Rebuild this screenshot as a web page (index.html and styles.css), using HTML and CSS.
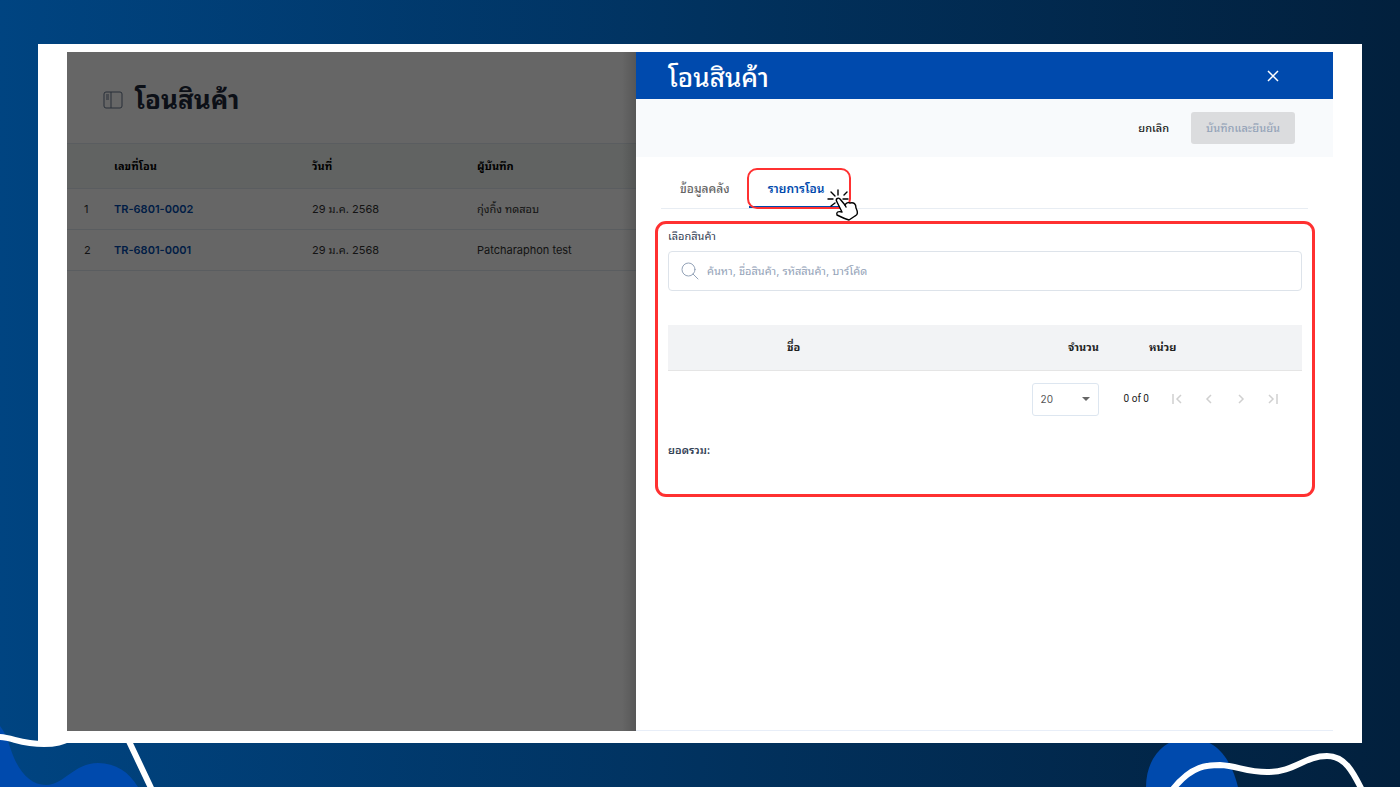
FILE: index.html
```html
<!DOCTYPE html>
<html lang="th">
  <head>
    <meta charset="utf-8">
    <title>โอนสินค้า</title>
    <link rel="stylesheet" href="styles.css">
  </head>
  <body>
    <svg class="deco deco-left" width="160" height="67" viewBox="0 0 160 67" aria-hidden="true">
      <path fill="#004aad" d="M0 6C6 14 8 21 11 30C18 51 30 65 46 65C64 65 74 43 98 43C116 43 129 52 138 67H0z" />
      <path fill="none" stroke="#fff" stroke-width="6" d="M-2 17C12 17 20 24 44 24C58 24 64 21 72 18M126 15L152 70" />
    </svg>
    <svg class="deco deco-right" width="260" height="52" viewBox="0 0 260 52" aria-hidden="true">
      <path fill="#004aad" d="M6 52C6 25 22 5 45 3C76 1 91 24 98 52z" />
      <path fill="none" stroke="#fff" stroke-width="6" d="M33 54C52 30 68 30 80 30C98 31 106 37 127 37C155 37 164 21 187 21C205 21 213 37 222 55" />
    </svg>

    <div class="card">
      <div class="app">
        <main class="list">
          <div class="list-title">
            <svg width="20" height="18" viewBox="0 0 20 18" fill="none" stroke="#64748b">
              <rect x="1" y="1" width="18" height="16" rx="2" />
              <path d="M8 1v16M3 4h3M3 6h3M3 8h3" />
            </svg>
            <h1>โอนสินค้า</h1>
          </div>
          <table>
            <thead>
              <tr>
                <th class="col-no"></th>
                <th class="col-id">เลขที่โอน</th>
                <th class="col-date">วันที่</th>
                <th>ผู้บันทึก</th>
              </tr>
            </thead>
            <tbody>
              <tr>
                <td class="col-no">1</td>
                <td><a href="#">TR-6801-0002</a></td>
                <td>29 ม.ค. 2568</td>
                <td>กุ่งกิ้ง ทดสอบ</td>
              </tr>
              <tr>
                <td class="col-no">2</td>
                <td><a href="#">TR-6801-0001</a></td>
                <td>29 ม.ค. 2568</td>
                <td>Patcharaphon test</td>
              </tr>
            </tbody>
          </table>
        </main>

        <aside class="drawer">
          <header class="drawer-header">
            <h2>โอนสินค้า</h2>
            <button class="btn-close" aria-label="ปิด">
              <svg width="12" height="12" viewBox="0 0 12 12" fill="none" stroke="#fff" stroke-width="1.5">
                <path d="M1 1l10 10M11 1L1 11" />
              </svg>
            </button>
          </header>
          <div class="toolbar">
            <button class="btn-cancel">ยกเลิก</button>
            <button class="btn-save" disabled>บันทึกและยืนยัน</button>
          </div>

          <nav class="tabs">
            <button class="tab">ข้อมูลคลัง</button>
            <button class="tab active">
              รายการโอน
              <svg class="pointer" width="32" height="34" viewBox="0 0 32 34" fill="none" stroke="#000" stroke-width="1.4" stroke-linecap="round" stroke-linejoin="round">
                <path d="M11 2v5M4 4l4 4M17 7l3-3M1 11h5M16 11h5M4 18l4-3" />
                <path fill="#fff" d="M10 14C8 11 11 9 13 11L18 17C19 15 21 14 23 15C27 14 29 16 29 20C31 24 31 27 28 28L22 32C18 31 14 29 10 27C9 24 11 23 15 24z" />
                <path d="M18 17l1 2" />
              </svg>
            </button>
          </nav>

          <section class="items">
            <label for="search">เลือกสินค้า</label>
            <div class="search">
              <svg width="18" height="18" viewBox="0 0 18 18" fill="none" stroke="#94a3b8" stroke-linecap="round">
                <circle cx="7.500" cy="7.500" r="6.500" />
                <path d="M12 12l5 5" />
              </svg>
              <input type="text" id="search" placeholder="ค้นหา, ชื่อสินค้า, รหัสสินค้า, บาร์โค้ด">
            </div>
            <table>
              <thead>
                <tr>
                  <th class="col-image"></th>
                  <th>ชื่อ</th>
                  <th class="col-qty">จำนวน</th>
                  <th class="col-unit">หน่วย</th>
                </tr>
              </thead>
            </table>
            <div class="paginator">
              <div class="page-size">
                <select aria-label="จำนวนต่อหน้า">
                  <option>20</option>
                </select>
                <svg width="8" height="4" viewBox="0 0 8 4"><path fill="#666" d="M0 0h8L4 4z" /></svg>
              </div>
              <span class="range">0 of 0</span>
              <button disabled aria-label="หน้าแรก">
                <svg width="12" height="12" viewBox="0 0 12 12"><path d="M2 1v10M10 2L6 6l4 4" /></svg>
              </button>
              <button disabled aria-label="ก่อนหน้า">
                <svg width="12" height="12" viewBox="0 0 12 12"><path d="M8 2L4 6l4 4" /></svg>
              </button>
              <button disabled aria-label="ถัดไป">
                <svg width="12" height="12" viewBox="0 0 12 12"><path d="M4 2l4 4-4 4" /></svg>
              </button>
              <button disabled aria-label="หน้าสุดท้าย">
                <svg width="12" height="12" viewBox="0 0 12 12"><path d="M2 2l4 4-4 4M10 1v10" /></svg>
              </button>
            </div>
            <p class="total">ยอดรวม:</p>
          </section>
        </aside>
      </div>
    </div>
  </body>
</html>
```

FILE: styles.css
```css
* {
  box-sizing: border-box;
}
body {
  margin: 0;
  min-height: 100vh;
  padding: 44px 38px;
  display: flex;
  position: relative;
  overflow: hidden;
  background: linear-gradient(90deg, #004481, #02203d);
  font-family: Inter, "Noto Sans Thai Looped", Loma, Tahoma, Waree, Garuda, sans-serif;
  font-size: 11px;
  line-height: 16px;
  color: #222;
}
button, input, select {
  font: inherit;
  color: inherit;
  border: none;
  background: none;
  padding: 0;
}
h1, h2, p {
  margin: 0;
}
h1, h2 {
  font-size: 26px;
  line-height: 36px;
}
table {
  width: 100%;
  table-layout: fixed;
  border-collapse: collapse;
}
th, td {
  padding: 0;
  text-align: left;
}
.deco {
  position: absolute;
  bottom: 0;
}
.deco-left {
  left: 0;
}
.deco-right {
  right: 0;
}
.card {
  position: relative;
  flex: 1;
  display: flex;
  padding: 8px 29px 12px;
  background: #fff;
}
.app {
  flex: 1;
  display: grid;
  grid-template-columns: 569fr 697fr;
}

/* list page, dimmed behind the drawer */
.list {
  position: relative;
  background: #fff;
}
.list::after {
  content: '';
  position: absolute;
  inset: 0;
  background: linear-gradient(270deg, rgba(0, 0, 0, 0.15), transparent 14px), rgba(0, 0, 0, 0.6);
}
.list-title {
  display: flex;
  align-items: center;
  gap: 12px;
  height: 91px;
  padding: 4px 36px 0;
}
.list-title h1 {
  font-weight: 700;
  color: #1e293b;
}
.list th {
  height: 45px;
  background: #f3f8f6;
  border-top: 1px solid #e2e8f0;
  border-bottom: 1px solid #e2e8f0;
  color: #000;
}
.list td {
  height: 41px;
  border-bottom: 1px solid #e2e8f0;
  color: #333;
}
.list .col-no {
  width: 47px;
  padding-left: 17px;
}
.list .col-id {
  width: 198px;
}
.list .col-date {
  width: 165px;
}
.list a {
  color: #004aad;
  font-weight: 600;
  text-decoration: none;
}

.drawer {
  border-bottom: 1px solid #e8eef8;
  background: #fff;
}
.drawer-header {
  display: flex;
  justify-content: space-between;
  align-items: center;
  height: 47px;
  padding: 0 54px 0 32px;
  background: #004aad;
  color: #fff;
}
.drawer-header h2 {
  padding-top: 4px;
  font-weight: 500;
}
.btn-close {
  display: flex;
}
.toolbar {
  display: flex;
  justify-content: flex-end;
  align-items: center;
  gap: 22px;
  height: 58px;
  padding: 0 38px;
  background: #f8fafc;
}
.btn-cancel {
  font-weight: 500;
}
.btn-save {
  height: 32px;
  padding: 0 15px;
  border-radius: 3px;
  background: #dbdcde;
  color: #94a3b8;
  font-weight: 500;
}

.tabs {
  display: flex;
  margin: 11px 25px 0;
  border-bottom: 1px solid #e8edf3;
}
.tab {
  position: relative;
  height: 40px;
  padding: 2px 19px 0;
  font-size: 12px;
  color: #666;
  font-weight: 500;
}
.tab.active {
  border-bottom: 2px solid #004aad;
  padding-top: 4px;
  color: #004aad;
  font-weight: 600;
}
/* highlight frame around the tab */
.tab.active::after {
  content: '';
  position: absolute;
  inset: 0 -8px -3px -2px;
  border: 2px solid #ff3131;
  border-radius: 10px;
}
.pointer {
  position: absolute;
  right: -16px;
  top: 20px;
  z-index: 1;
}

.items {
  margin: 12px 18px 0 19px;
  padding: 4px 10px 36px;
  border: 3px solid #ff3131;
  border-radius: 11px;
}
.items label {
  display: block;
  margin-bottom: 7px;
  color: #334155;
}
.search {
  display: flex;
  align-items: center;
  gap: 8px;
  height: 40px;
  padding: 0 12px;
  border: 1px solid #dde3ea;
  border-radius: 4px;
}
.search input {
  flex: 1;
  outline: none;
}
.search input::placeholder {
  color: #94a3b8;
}
.items table {
  margin-top: 34px;
}
.items th {
  height: 45px;
  background: #f2f3f5;
  border-bottom: 1px solid #e5e5e5;
}
.col-image {
  width: 119px;
}
.col-qty {
  width: 81px;
}
.col-unit {
  width: 153px;
}
.paginator {
  display: flex;
  justify-content: flex-end;
  align-items: center;
  gap: 20px;
  padding: 12px 23px 12px 0;
  font-size: 10px;
}
.page-size {
  display: flex;
  align-items: center;
  width: 67px;
  height: 33px;
  padding-right: 8px;
  border: 1px solid #dde6f0;
  border-radius: 3px;
}
.page-size select {
  flex: 1;
  height: 100%;
  padding-left: 8px;
  appearance: none;
  color: #555;
}
.range {
  margin: 0 2px 0 5px;
  font-family: Roboto, sans-serif;
}
.paginator button {
  display: flex;
}
.paginator button path {
  fill: none;
  stroke: #d0d0d0;
  stroke-width: 1.5;
}
.total {
  margin-top: 14px;
  font-weight: 600;
  color: #334155;
}
```
